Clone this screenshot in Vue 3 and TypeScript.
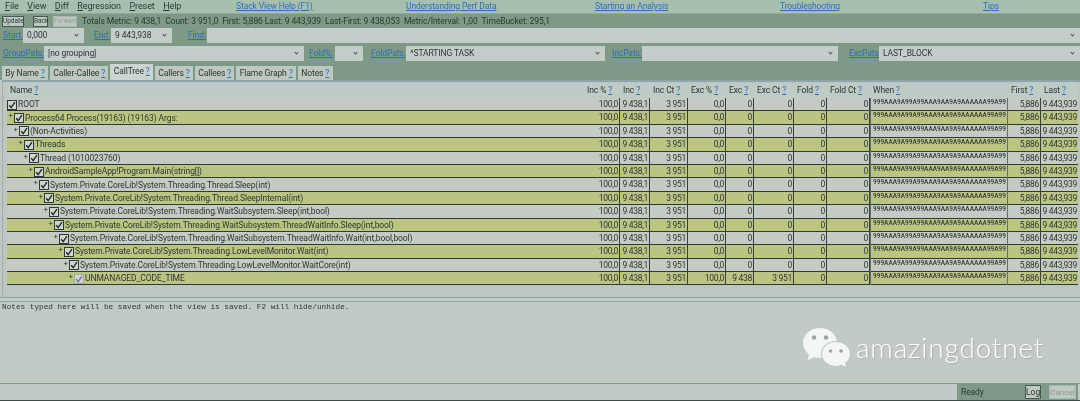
<script setup lang="ts">
interface TreeRow {
	name: string;
	depth: number;
	exc?: boolean;
}

const menus = ['File', 'View', 'Diff', 'Regression', 'Preset', 'Help'];
const helpLinks = ['Stack View Help (F1)', 'Understanding Perf Data', 'Starting an Analysis', 'Troubleshooting', 'Tips'];
const tabs = ['By Name', 'Caller-Callee', 'CallTree', 'Callers', 'Callees', 'Flame Graph', 'Notes'];
const columns = ['Name', 'Inc %', 'Inc', 'Inc Ct', 'Exc %', 'Exc', 'Exc Ct', 'Fold', 'Fold Ct', 'When', 'First', 'Last'];
const whenText = '999AAA9A99A99AAA9AA9A9AAAAAA99A99';

const rows: TreeRow[] = [
	{ name: 'ROOT', depth: 0 },
	{ name: 'Process64 Process(19163) (19163) Args:', depth: 1 },
	{ name: '(Non-Activities)', depth: 2 },
	{ name: 'Threads', depth: 3 },
	{ name: 'Thread (1010023760)', depth: 4 },
	{ name: 'AndroidSampleApp!Program.Main(string[])', depth: 5 },
	{ name: 'System.Private.CoreLib!System.Threading.Thread.Sleep(int)', depth: 6 },
	{ name: 'System.Private.CoreLib!System.Threading.Thread.SleepInternal(int)', depth: 7 },
	{ name: 'System.Private.CoreLib!System.Threading.WaitSubsystem.Sleep(int,bool)', depth: 8 },
	{ name: 'System.Private.CoreLib!System.Threading.WaitSubsystem.ThreadWaitInfo.Sleep(int,bool)', depth: 9 },
	{ name: 'System.Private.CoreLib!System.Threading.WaitSubsystem.ThreadWaitInfo.Wait(int,bool,bool)', depth: 10 },
	{ name: 'System.Private.CoreLib!System.Threading.LowLevelMonitor.Wait(int)', depth: 11 },
	{ name: 'System.Private.CoreLib!System.Threading.LowLevelMonitor.WaitCore(int)', depth: 12 },
	{ name: 'UNMANAGED_CODE_TIME', depth: 13, exc: true },
];
</script>

<template>
	<div class="app">
		<div class="menu">
			<div class="menu-items">
				<span v-for="m in menus" :key="m"><u>{{ m[0] }}</u>{{ m.slice(1) }}</span>
			</div>
			<a v-for="l in helpLinks" :key="l" class="link">{{ l }}</a>
		</div>

		<div class="toolbar">
			<button class="btn btn-update">Update</button>
			<button class="btn btn-back">Back</button>
			<button class="btn btn-forward">Forward</button>
			<span class="totals">Totals Metric: 9 438,1&nbsp;&nbsp;Count: 3 951,0&nbsp;&nbsp;First: 5,886 Last: 9 443,939&nbsp;&nbsp;Last-First: 9 438,053&nbsp;&nbsp;Metric/Interval: 1,00&nbsp;&nbsp;TimeBucket: 295,1</span>
		</div>

		<div class="filters filters-top">
			<a class="link f-start">Start:</a>
			<div class="combo w-start">0,000<i class="caret"></i></div>
			<a class="link f-end">End:</a>
			<div class="combo w-end">9 443,938<i class="caret"></i></div>
			<a class="link f-find">Find:</a>
			<div class="combo grow"><i class="caret"></i></div>
		</div>

		<div class="filters filters-pats">
			<a class="link f-group">GroupPats:</a>
			<div class="combo w-group">[no grouping]<i class="caret"></i></div>
			<a class="link f-fold">Fold%:</a>
			<div class="combo w-fold"><i class="caret"></i></div>
			<a class="link f-foldpats">FoldPats:</a>
			<div class="combo w-foldpats">^STARTING TASK<i class="caret"></i></div>
			<a class="link f-inc">IncPats:</a>
			<div class="combo w-inc"><i class="caret"></i></div>
			<a class="link f-exc">ExcPats:</a>
			<div class="combo grow">LAST_BLOCK<i class="caret"></i></div>
		</div>

		<div class="tabs">
			<div v-for="t in tabs" :key="t" class="tab" :class="{ active: t === 'CallTree' }">
				{{ t }} <a class="q">?</a>
			</div>
		</div>

		<div class="panel">
			<div class="grid-row head">
				<div v-for="c in columns" :key="c" class="head-cell">{{ c }} <a class="q">?</a></div>
			</div>
			<div v-for="(r, i) in rows" :key="r.name" class="grid-row row" :class="{ odd: i % 2 === 1 }">
				<div class="cell name">
					<span class="tree" :style="{ width: (r.depth === 0 ? 0 : 2 + r.depth * 5) + 'px' }">
						<span v-if="r.depth" class="plus">+</span>
					</span>
					<svg class="check" :class="{ faded: r.exc }" viewBox="0 0 10 10" width="10" height="10">
						<rect x="0.5" y="0.5" width="9" height="9" />
						<path d="M2.2 5.2 L4.2 7.6 L7.9 2.2" />
					</svg>
					<span class="label">{{ r.name }}</span>
				</div>
				<div class="cell">100,0</div>
				<div class="cell">9 438,1</div>
				<div class="cell">3 951</div>
				<div class="cell">{{ r.exc ? '100,0' : '0,0' }}</div>
				<div class="cell">{{ r.exc ? '9 438' : '0' }}</div>
				<div class="cell">{{ r.exc ? '3 951' : '0' }}</div>
				<div class="cell">0</div>
				<div class="cell">0</div>
				<div class="cell when">{{ whenText }}</div>
				<div class="cell">5,886</div>
				<div class="cell">9 443,939</div>
			</div>
		</div>

		<div class="splitter"></div>

		<div class="notes">Notes typed here will be saved when the view is saved. F2 will hide/unhide.</div>

		<div class="status">
			<div class="status-box">
				<span class="ready">Ready</span>
				<button class="btn btn-log">Log</button>
				<button class="btn btn-cancel">Cancel</button>
			</div>
		</div>

		<div class="watermark">
			<svg class="wechat" viewBox="0 0 48 42" width="48" height="42">
				<path class="bubble" d="M17 0 C26.500 0 34 6.500 34 15 C34 23.500 26.500 30 17 30 C14.800 30 12.800 29.700 11 29 L4.500 32.500 L6 26.500 C2.300 23.600 0 19.500 0 15 C0 6.500 7.500 0 17 0 Z" />
				<circle class="eye" cx="11" cy="9.500" r="2.200" />
				<circle class="eye" cx="23" cy="9.500" r="2.200" />
				<path class="bubble front" d="M33 13.500 C41 13.500 47.500 19 47.500 26 C47.500 29.800 45.500 33 42.700 35.300 L44 40 L38.500 37.300 C36.800 37.900 35 38.500 33 38.500 C25 38.500 18.500 33 18.500 26 C18.500 19 25 13.500 33 13.500 Z" />
				<circle class="eye" cx="27.500" cy="23" r="1.800" />
				<circle class="eye" cx="38" cy="23" r="1.800" />
			</svg>
			<span class="wm-text">amazingdotnet</span>
		</div>
	</div>
</template>

<style scoped>
.app {
	position: relative;
	width: 1080px;
	height: 401px;
	overflow: hidden;
	display: flex;
	flex-direction: column;
	background-color: #bfc8c3;
	color: #2a3833;
	font-family: Roboto, "Noto Sans", sans-serif;
	font-size: 8.500px;
	letter-spacing: -0.100px;
	line-height: 12px;
	filter: blur(0.35px);
}

.link,
.q {
	color: #2f6fb5;
	text-decoration: underline;
}

.menu {
	display: grid;
	grid-template-columns: 236px 170px 189px 185px 203px auto;
	height: 13px;
	align-items: center;
	background-color: #a6c0af;
	padding-bottom: 1px;
	box-sizing: border-box;
}

.menu-items {
	display: flex;
	gap: 8.500px;
	padding-left: 5px;
	font-size: 9px;
}

.toolbar {
	display: flex;
	align-items: center;
	height: 15px;
	background-color: #7e9a87;
	border-top: 1px solid #90a99a;
	box-sizing: border-box;
}

.btn {
	font: inherit;
	font-size: 6.500px;
	line-height: 9px;
	height: 11px;
	padding: 0;
	color: #2a3833;
	background-color: #bfc9c3;
	border: 1px solid #46584f;
	box-sizing: border-box;
}

.btn-update {
	width: 22px;
	margin-left: 2px;
}

.btn-back {
	width: 15px;
	margin-left: 9px;
}

.btn-forward {
	width: 24px;
	margin-left: 5px;
	border-color: #a9b8ae;
	color: #8d9b93;
}

.totals {
	margin-left: 5px;
	white-space: nowrap;
}

.filters {
	display: flex;
	align-items: flex-start;
	background-color: #7e9a87;
	line-height: 15px;
}

.filters-top {
	height: 17px;
}

.filters-pats {
	height: 18px;
	padding-top: 1px;
	box-sizing: border-box;
}

.combo {
	position: relative;
	height: 15px;
	padding-left: 4px;
	box-sizing: border-box;
	background-color: #c4cec8;
	white-space: nowrap;
}

.caret {
	position: absolute;
	right: 6px;
	top: 5px;
	width: 2px;
	height: 2px;
	border-right: 1px solid #46584f;
	border-bottom: 1px solid #46584f;
	transform: rotate(45deg);
}

.grow {
	flex: 1;
}

/* link boxes get fixed widths so the combos keep their places whatever the font does */
.link[class*="f-"] {
	flex: none;
	white-space: nowrap;
}

.f-start {
	width: 20px;
	margin-left: 3px;
}

.f-end {
	width: 17px;
	margin-left: 10px;
}

.f-find {
	width: 19px;
	margin-left: 16px;
}

.f-group {
	width: 41px;
	margin-left: 3px;
}

.f-fold {
	width: 26px;
	margin-left: 5px;
}

.f-foldpats {
	width: 35px;
	margin-left: 8px;
}

.f-inc {
	width: 30px;
	margin-left: 7px;
}

.f-exc {
	width: 30px;
	margin-left: 11px;
}

.w-start,
.w-end {
	width: 61px;
}

.w-group {
	width: 260px;
}

.w-fold {
	width: 28px;
}

.w-foldpats {
	width: 199px;
}

.w-inc {
	width: 196px;
}

.tabs {
	display: flex;
	align-items: flex-end;
	gap: 2px;
	height: 17px;
	padding-left: 2px;
	background-color: #7e9a87;
}

.tab {
	height: 14px;
	line-height: 14px;
	padding: 0 3.300px;
	background-color: #bcc8c0;
	white-space: nowrap;
}

.tab.active {
	height: 16px;
	background-color: #ccd4cf;
}

.panel {
	margin-left: 2px;
	padding-top: 1px;
	padding-left: 4px;
	padding-right: 2px;
	padding-bottom: 12px;
	border-top: 2px solid #8fa6a8;
	border-left: 1px solid #9fb0ac;
	background-color: #bcc7c1;
}

.grid-row {
	display: grid;
	grid-template-columns: 577px 36px 30px 38px 38px 28px 40px 33px 43px 138px 33px 37px;
}

.head {
	height: 15px;
	line-height: 15px;
	background-color: #bfcbc6;
}

.head-cell {
	padding-left: 3px;
	white-space: nowrap;
	overflow: hidden;
}

.row {
	height: 13.400px;
	line-height: 13px;
	background-color: #c6cac5;
	box-shadow: inset 0 -1px 0 #2d3b33;
	box-sizing: border-box;
}

.row.odd {
	background-color: #bcc482;
}

.cell {
	text-align: right;
	padding-right: 1px;
	letter-spacing: -0.300px;
	border-right: 1px solid #33423a;
	overflow: hidden;
	white-space: nowrap;
}

.cell:last-child {
	border-right: 0;
}

.name {
	display: flex;
	align-items: center;
	text-align: left;
	letter-spacing: -0.100px;
	border-right: 0;
}

.tree {
	position: relative;
	flex: none;
	height: 100%;
}

.plus {
	position: absolute;
	right: 0;
	top: -2px;
	font-size: 8px;
	margin-right: 1px;
}

.check {
	flex: none;
	margin-right: 1px;
}

.check rect {
	fill: #d0d4d0;
	stroke: #2d3b33;
	stroke-width: 1;
}

.check path {
	fill: none;
	stroke: #1f2a25;
	stroke-width: 1.400;
}

.check.faded rect {
	fill: #d0d4d0;
	stroke: #a3ad9a;
}

.check.faded path {
	stroke: #6f7f8a;
}

.when {
	font-size: 6.500px;
	line-height: 9px;
	letter-spacing: 0;
	text-align: left;
	padding-left: 2px;
	padding-right: 0;
	font-weight: 500;
	border-left: 1px solid #5f6f6a;
	border-right: 1px solid #5f6f6a;
}

.splitter {
	height: 5px;
	box-sizing: border-box;
	background-color: #c2cbc6;
	border-top: 1px solid #8fa6a8;
	border-bottom: 1px solid #8fa6a8;
}

.notes {
	flex: 1;
	padding: 0 2px;
	font-family: "Liberation Mono", monospace;
	font-size: 7.730px;
	letter-spacing: 0;
	line-height: 10px;
	background-color: #c2cac5;
}

.status {
	display: flex;
	justify-content: flex-end;
	height: 18px;
	padding-right: 2px;
	background-color: #c2cac5;
	border-top: 1px solid #7e9a87;
	border-bottom: 1px solid #3d4c44;
	box-sizing: border-box;
}

.status-box {
	display: flex;
	align-items: center;
	width: 121px;
	background-color: #7e9a87;
}

.ready {
	margin-left: 4px;
	width: 28px;
}

.btn-log {
	width: 16px;
	height: 14px;
	font-size: 8.500px;
	margin-left: 36px;
}

.btn-cancel {
	width: 27px;
	height: 14px;
	font-size: 8px;
	margin-left: 8px;
	border-color: #a9b8ae;
	color: #8d9b93;
}

.watermark {
	position: absolute;
	left: 803px;
	top: 328px;
	display: flex;
	align-items: center;
	color: #fff;
}

.wechat {
	flex: none;
}

.bubble {
	fill: #f4f6f5;
}

.front {
	stroke: #bfc8c3;
	stroke-width: 1.200;
}

.eye {
	fill: #9aa5a0;
}

.wm-text {
	margin-left: 5px;
	font-family: Lato, sans-serif;
	font-weight: 300;
	font-size: 28px;
	line-height: 32px;
	letter-spacing: 0.800px;
	margin-top: -5px;
	text-shadow: 1px 1px 1px rgba(60, 70, 65, 0.2);
}
</style>
